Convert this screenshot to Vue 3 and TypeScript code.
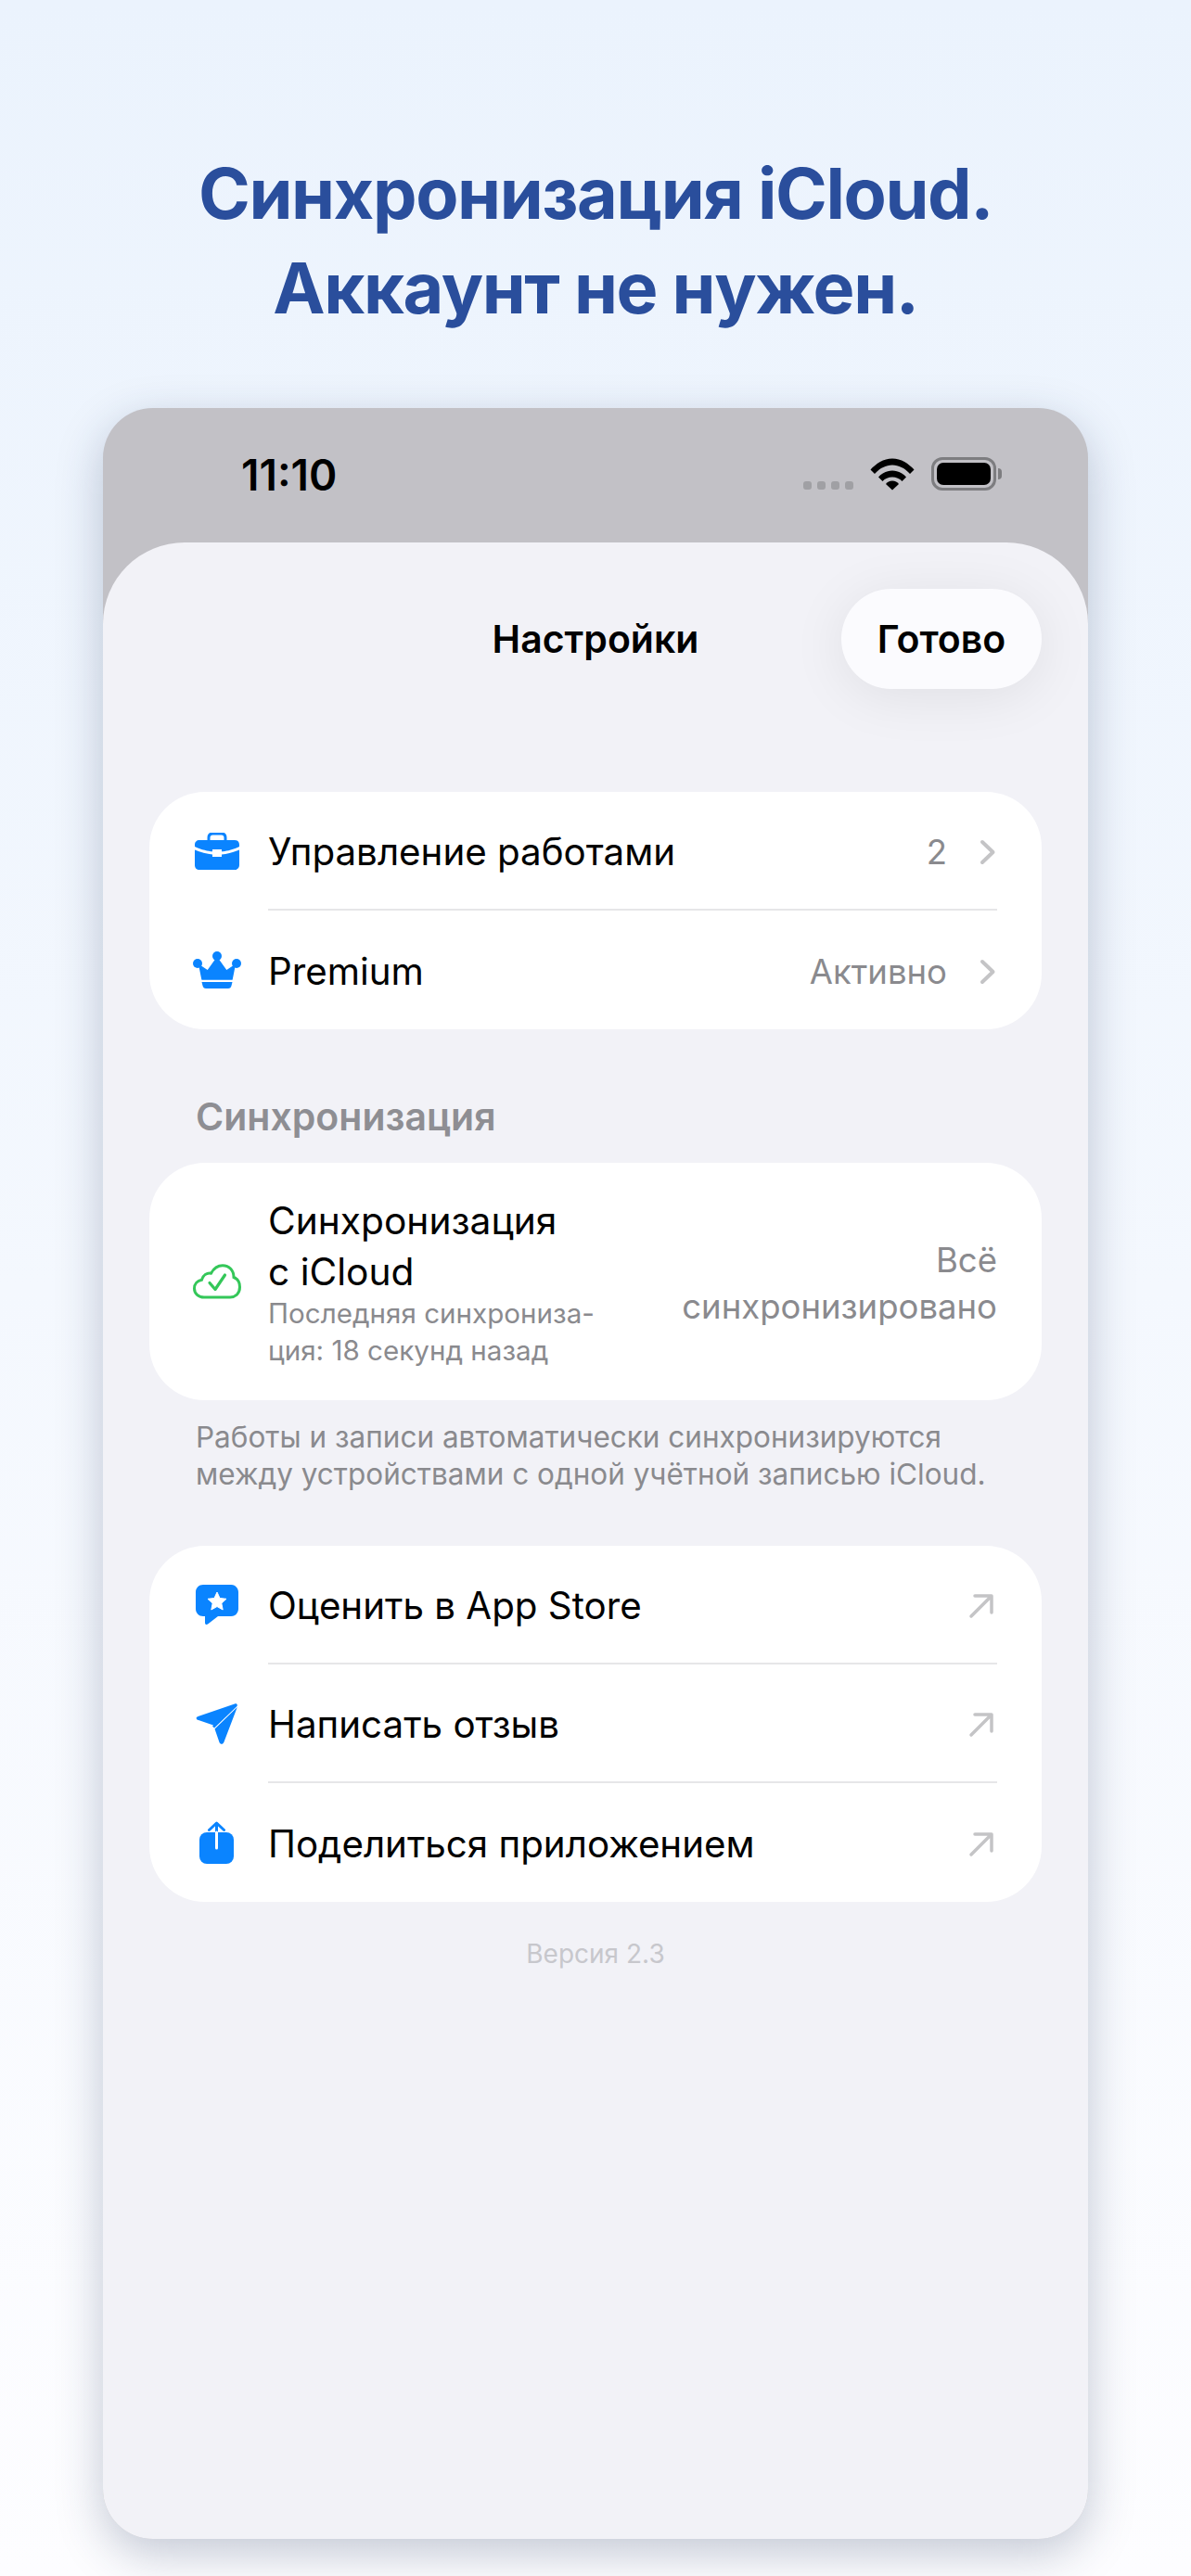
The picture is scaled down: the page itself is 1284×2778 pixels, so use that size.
<script setup lang="ts">
interface Row { title: string; value: string; icon: string }
const top: Row[] = [
  { title: 'Управление работами', value: '2', icon: 'case' },
  { title: 'Premium', value: 'Активно', icon: 'crown' },
]
const links: Row[] = [
  { title: 'Оценить в App Store', value: '', icon: 'star' },
  { title: 'Написать отзыв', value: '', icon: 'plane' },
  { title: 'Поделиться приложением', value: '', icon: 'share' },
]
</script>

<template>
  <div class="page">
    <h1 class="headline">Синхронизация iCloud.<br />Аккаунт не нужен.</h1>
    <div class="phone">
      <div class="status">
        <span class="time">11:10</span>
        <div class="indicators">
          <div class="dots"><i></i><i></i><i></i><i></i></div>
          <svg class="wifi" viewBox="0 0 48 36" width="48" height="36">
            <path d="M0.5 13.5C6.5 7 14.5 1.5 24 1.5S41.500 7 47.500 13.500L43 18C38 12.500 31.500 8.500 24 8.500S10 12.500 5 18Z" />
            <path d="M9 21.500C12.500 17.500 18 14.500 24 14.500S35.500 17.500 39 21.500L34.500 26C32 23.200 28 21.500 24 21.500S16 23.200 13.500 26Z" />
            <path d="M17 29C18.500 26.800 21 25.500 24 25.500S29.500 26.800 31 29L24 35.500Z" />
          </svg>
          <div class="battery"><div class="cell"></div></div>
          <div class="nub"></div>
        </div>
      </div>
      <div class="sheet">
        <div class="nav">
          <span class="nav-title">Настройки</span>
          <button class="done">Готово</button>
        </div>

        <section class="card first">
          <div v-for="r in top" :key="r.title" class="row">
            <div class="ico">
              <svg v-if="r.icon === 'case'" viewBox="0 0 48 40" width="48" height="40">
                <path d="M15 9V5.500C15 2.500 17 1 19.500 1H28.500C31 1 33 2.500 33 5.500V9" fill="none" stroke="#0a84ff" stroke-width="3" />
                <path d="M5 8H43C46 8 48 10 48 13V15C41 18.500 33 20 29 20.300V18H19V20.300C15 20 7 18.500 0 15V13C0 10 2 8 5 8Z" fill="#0a84ff" />
                <path d="M0 18.500C6 21 13 23 19 23.500V26H29V23.500C35 23 42 21 48 18.500V35C48 38 46 40 43 40H5C2 40 0 38 0 35Z" fill="#0a84ff" />
              </svg>
              <svg v-else viewBox="0 0 52 40" width="52" height="40">
                <circle cx="26" cy="5" r="5" fill="#0a84ff" />
                <circle cx="5" cy="13" r="5" fill="#0a84ff" />
                <circle cx="47" cy="13" r="5" fill="#0a84ff" />
                <path d="M26 7L36 21L45 15L42 30H10L7 15L16 21Z" fill="#0a84ff" stroke="#0a84ff" stroke-linejoin="round" stroke-width="1.500" />
                <path d="M9.500 33H42.500L41.500 37C41 39 40 40 38 40H14C12 40 11 39 10.500 37Z" fill="#0a84ff" />
              </svg>
            </div>
            <div class="line">
              <span class="title">{{ r.title }}</span>
              <span class="value">{{ r.value }}</span>
              <svg class="chev" viewBox="0 0 18 28" width="18" height="28">
                <path d="M3 3L14.500 14L3 25" fill="none" stroke="#c4c4c6" stroke-width="4" stroke-linecap="round" stroke-linejoin="round" />
              </svg>
            </div>
          </div>
        </section>

        <h2 class="section">Синхронизация</h2>
        <section class="card sync">
          <div class="ico">
            <svg viewBox="0 0 52 38" width="52" height="38">
              <path d="M12 36C6 36 1.500 32 1.500 26.500C1.500 21.500 5 18 9.500 17.200C11 12 15 9.500 19.500 10.200C22.500 4.800 27 1.800 32 1.800C39 1.800 44 7 44 14.500C48 16 50.500 20 50.500 25C50.500 31.500 46 36 40 36Z" fill="none" stroke="#34c759" stroke-width="3" />
              <path d="M18 20.500L24 27.500L34.500 12" fill="none" stroke="#34c759" stroke-width="3.200" stroke-linecap="round" stroke-linejoin="round" />
            </svg>
          </div>
          <div class="sync-text">
            <div class="sync-title">Синхронизация<br />с iCloud</div>
            <div class="sync-sub">Последняя синхрониза-<br />ция: 18 секунд назад</div>
          </div>
          <div class="sync-state">Всё<br />синхронизировано</div>
        </section>
        <p class="note">Работы и записи автоматически синхронизируются<br />между устройствами с одной учётной записью iCloud.</p>

        <section class="card">
          <div v-for="r in links" :key="r.title" class="row">
            <div class="ico">
              <svg v-if="r.icon === 'star'" viewBox="0 0 46 44" width="46" height="44">
                <path d="M8 0H38C42.500 0 46 3.500 46 8V26C46 30.500 42.500 34 38 34H24L13 42.500C11.500 43.500 10 43 10 41V34H8C3.500 34 0 30.500 0 26V8C0 3.500 3.500 0 8 0Z" fill="#0a84ff" />
                <path d="M23 8L26 14.500L33 15.300L27.800 20L29.200 27L23 23.500L16.800 27L18.200 20L13 15.300L20 14.500Z" fill="#fff" stroke="#fff" stroke-linejoin="round" />
              </svg>
              <svg v-else-if="r.icon === 'plane'" viewBox="0 0 46 46" width="46" height="46">
                <path d="M42 1.500C44 0.800 45.500 2 44.500 4L20 27.500L18 25.500L41 3.500L19 24.500L3 19C0 18 0 16 2.500 15Z" fill="#0a84ff" />
                <path d="M44.800 5L30.500 42.500C29.500 45.500 26.500 45.500 25.500 43L20.500 28.500Z" fill="#0a84ff" />
              </svg>
              <svg v-else viewBox="0 0 38 47" width="38" height="47">
                <rect x="0" y="12" width="37" height="34" rx="8" fill="#0a84ff" />
                <path d="M18.500 12V2.500M10.500 9.500L18.500 2L26.500 9.500" fill="none" stroke="#0a84ff" stroke-width="3" stroke-linecap="round" stroke-linejoin="round" />
                <path d="M18.500 12V29" fill="none" stroke="#fff" stroke-width="3" stroke-linecap="round" />
              </svg>
            </div>
            <div class="line">
              <span class="title">{{ r.title }}</span>
              <svg class="ext" viewBox="0 0 28 28" width="28" height="28">
                <path d="M3 25L24.500 3.500M7 3H25V21" fill="none" stroke="#c4c4c6" stroke-width="3.500" stroke-linecap="round" stroke-linejoin="round" />
              </svg>
            </div>
          </div>
        </section>

        <p class="version">Версия 2.3</p>
      </div>
    </div>
  </div>
</template>

<style scoped>
.page {
  box-sizing: border-box;
  width: 1284px;
  height: 2778px;
  overflow: hidden;
  padding: 158px 111px 40px;
  display: flex;
  flex-direction: column;
  background: linear-gradient(180deg, #ebf3fd 0%, #fdfdff 100%);
  font-family: Inter, "Noto Sans", sans-serif;
}
.headline {
  margin: 0 0 74px;
  height: 208px;
  text-align: center;
  color: #2a4e9c;
  font-size: 75.500px;
  line-height: 102px;
  font-weight: 700;
  letter-spacing: -1.400px;
}
.phone {
  flex: 1;
  display: flex;
  flex-direction: column;
  border-radius: 54px;
  background: #c2c1c6;
  box-shadow: 0 16px 50px rgba(30, 50, 90, 0.26);
}
.status {
  height: 145px;
  position: relative;
  flex: none;
  padding: 0 93px 0 149px;
  display: flex;
  justify-content: space-between;
}
.time {
  margin-top: 44px;
  font-size: 46px;
  line-height: 56px;
  font-weight: 600;
  color: #000;
}
.indicators {
  margin-top: 53px;
  display: flex;
  align-items: flex-start;
  height: 36px;
}
.dots {
  display: flex;
  gap: 6px;
  margin-top: 26px;
  margin-right: 18px;
}
.dots i {
  width: 9px;
  height: 9px;
  border-radius: 3px;
  background: #a0a0a4;
}
.battery {
  box-sizing: border-box;
  margin-left: 18px;
  width: 70px;
  height: 36px;
  padding: 3px;
  border: 3px solid #7d7d80;
  border-radius: 12px;
}
.cell {
  width: 100%;
  height: 100%;
  background: #000;
  border-radius: 7px;
}
.nub {
  margin: 12px 0 0 2px;
  width: 4px;
  height: 12px;
  background: #7d7d80;
  border-radius: 0 4px 4px 0;
}
.sheet {
  flex: 1;
  background: #f2f2f7;
  border-radius: 88px 88px 54px 54px;
  padding: 50px 50px 0;
  display: flex;
  flex-direction: column;
}
.nav {
  height: 108px;
  flex: none;
  position: relative;
  display: flex;
  align-items: center;
  justify-content: center;
  margin-bottom: 111px;
}
.nav-title {
  font-size: 41px;
  font-weight: 600;
  color: #000;
}
.done {
  position: absolute;
  right: 0;
  top: 0;
  width: 216px;
  height: 108px;
  border: 0;
  border-radius: 54px;
  background: #fbfbfe;
  box-shadow: 0 8px 60px rgba(0, 0, 0, 0.08);
  font: 600 41px Inter, "Noto Sans", sans-serif;
  color: #000;
}
.card {
  background: #fff;
  border-radius: 60px;
}
.row {
  height: 128px;
  display: flex;
  align-items: stretch;
}
.ico {
  width: 128px;
  flex: none;
  display: flex;
  align-items: center;
  justify-content: center;
  padding-left: 18px;
  box-sizing: border-box;
}
.row .ico svg {
  display: block;
}
.line {
  flex: 1;
  box-sizing: border-box;
  margin-right: 48px;
  padding-top: 3px;
  display: flex;
  align-items: center;
  border-bottom: 2px solid #e6e6e8;
}
.row:last-child .line {
  border-bottom: 0;
}
.title {
  flex: 1;
  font-size: 40.300px;
  color: #000;
}
.value {
  font-size: 36.500px;
  color: #8a8a8e;
  margin-right: 35px;
}
.chev {
  display: block;
  margin-right: 1px;
}
.ext {
  display: block;
  margin-right: 3px;
}
.section {
  margin: 69px 0 25px 50px;
  font-size: 41px;
  line-height: 50px;
  font-weight: 600;
  color: #8e8e93;
}
.sync {
  height: 256px;
  display: flex;
  align-items: center;
  padding-right: 48px;
}
.sync-text {
  flex: 1;
}
.sync-title {
  font-size: 40.700px;
  line-height: 55px;
  color: #000;
}
.sync-sub {
  margin-top: -3px;
  font-size: 29.600px;
  line-height: 40px;
  color: #8a8a8e;
}
.sync-state {
  margin-top: 4px;
  text-align: right;
  font-size: 36.500px;
  line-height: 50px;
  color: #8a8a8e;
}
.note {
  margin: 20px 0 57px 50px;
  font-size: 31.500px;
  line-height: 40px;
  color: #8a8a8e;
}
.version {
  margin: 36px 0 0;
  text-align: center;
  font-size: 28px;
  line-height: 40px;
  color: #c7c7cc;
}
</style>

<style>
body { margin: 0; }
</style>
